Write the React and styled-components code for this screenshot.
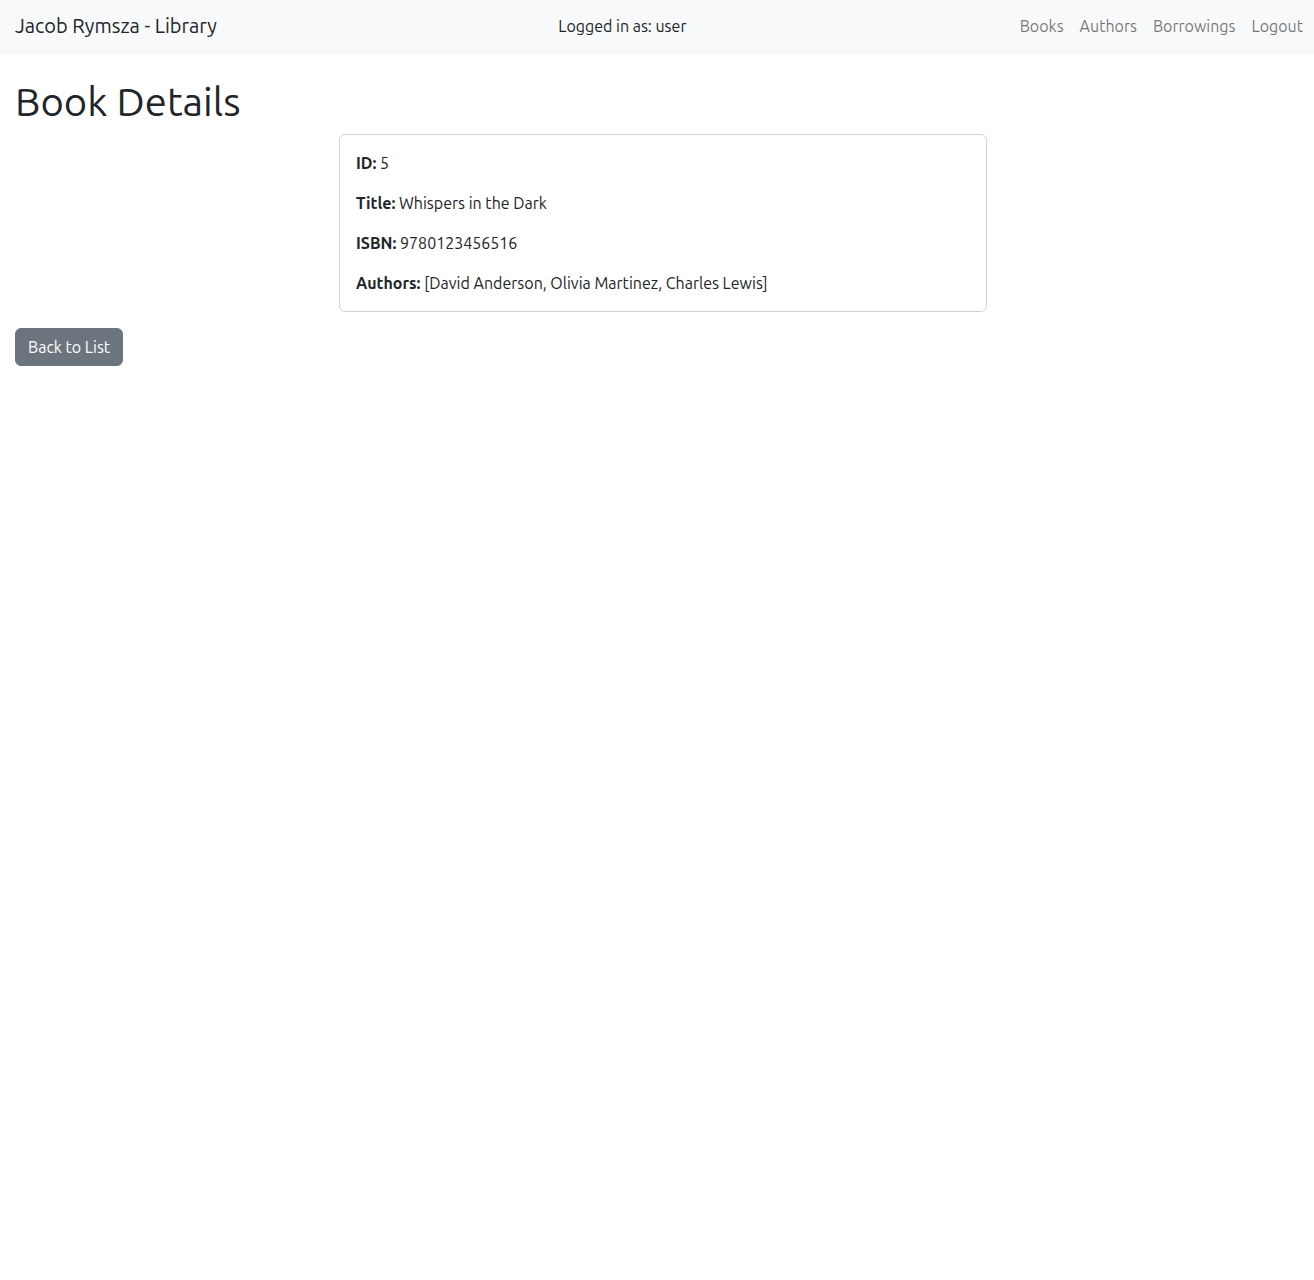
import React from "react";
import styled, { createGlobalStyle } from "styled-components";

const GlobalStyle = createGlobalStyle`
  * { box-sizing: border-box; }
  body {
    margin: 0;
    font-family: "Ubuntu", "Noto Sans", sans-serif;
    font-size: 16px;
    line-height: 1.5;
    color: #212529;
    background: #fff;
  }
`;

const book = {
  id: 5,
  title: "Whispers in the Dark",
  isbn: "9780123456516",
  authors: ["David Anderson", "Olivia Martinez", "Charles Lewis"],
};

const App = () => {
  return (
    <>
      <GlobalStyle />
      <Navbar>
        <Brand href="#">Jacob Rymsza - Library</Brand>
        <LoggedIn>Logged in as: user</LoggedIn>
        <NavList>
          <NavLink href="#">Books</NavLink>
          <NavLink href="#">Authors</NavLink>
          <NavLink href="#">Borrowings</NavLink>
          <NavLink href="#">Logout</NavLink>
        </NavList>
      </Navbar>

      <Main>
        <Heading>Book Details</Heading>
        <CardRow>
          <Card>
            <Field>
              <strong>ID:</strong> {book.id}
            </Field>
            <Field>
              <strong>Title:</strong> {book.title}
            </Field>
            <Field>
              <strong>ISBN:</strong> {book.isbn}
            </Field>
            <Field>
              <strong>Authors:</strong> [{book.authors.join(", ")}]
            </Field>
          </Card>
        </CardRow>
        <BackButton href="#">Back to List</BackButton>
      </Main>
    </>
  );
};

export default App;

// -------------------- Styles --------------------
const Navbar = styled.nav`
  display: flex;
  align-items: center;
  height: 54px;
  padding: 0 3px 2px 15px;
  background: #f8f9fa;
`;

const Brand = styled.a`
  margin-right: 16px;
  font-size: 20px;
  color: #212529;
  text-decoration: none;
`;

const LoggedIn = styled.span`
  margin: 0 auto;
  color: #212529;
`;

const NavList = styled.div`
  display: flex;
`;

const NavLink = styled.a`
  padding: 8px;
  color: rgba(0, 0, 0, 0.55);
  text-decoration: none;
`;

const Main = styled.main`
  padding: 24px 15px 0;
`;

const Heading = styled.h1`
  margin: 0 0 8px;
  font-size: 40px;
  font-weight: 400;
  line-height: 1.2;
`;

const CardRow = styled.div`
  display: flex;
  padding-left: 324px;
`;

const Card = styled.div`
  width: 648px;
  padding: 16px;
  border: 1px solid rgba(0, 0, 0, 0.175);
  border-radius: 6px;
`;

const Field = styled.p`
  margin: 0 0 16px;

  &:last-child {
    margin-bottom: 0;
  }

  strong {
    font-weight: 700;
  }
`;

const BackButton = styled.a`
  display: inline-block;
  margin-top: 16px;
  padding: 6px 12px;
  border: 1px solid #6c757d;
  border-radius: 6px;
  background: #6c757d;
  color: #fff;
  text-decoration: none;
`;
